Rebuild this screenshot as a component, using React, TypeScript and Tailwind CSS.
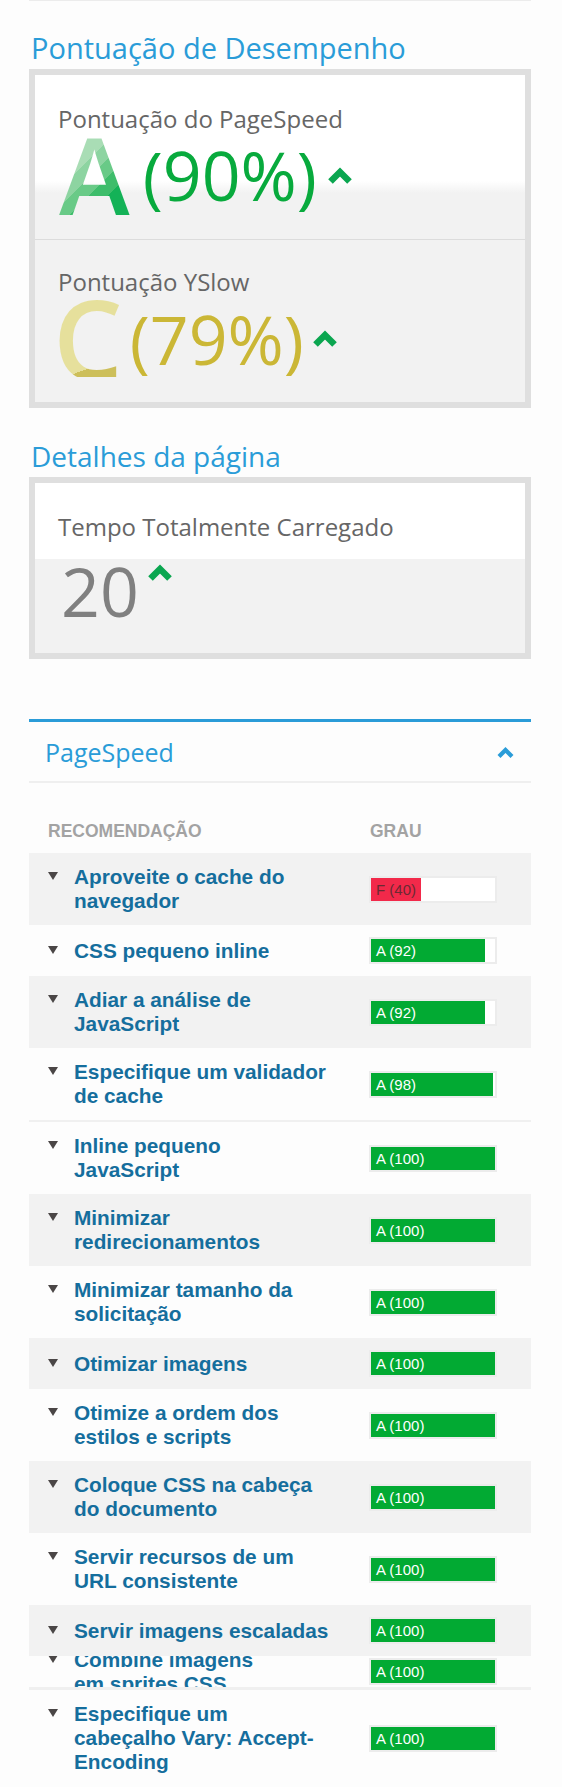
import React from "react";

type Row = {
  lines: string[];
  grade: string;
  score: number;
  gray: boolean;
  clip?: boolean;
  lineBefore?: number;
};

const rows: Row[] = [
  { lines: ["Aproveite o cache do", "navegador"], grade: "F", score: 40, gray: true },
  { lines: ["CSS pequeno inline"], grade: "A", score: 92, gray: false },
  { lines: ["Adiar a análise de", "JavaScript"], grade: "A", score: 92, gray: true },
  { lines: ["Especifique um validador", "de cache"], grade: "A", score: 98, gray: false },
  { lines: ["Inline pequeno", "JavaScript"], grade: "A", score: 100, gray: false, lineBefore: 2 },
  { lines: ["Minimizar", "redirecionamentos"], grade: "A", score: 100, gray: true },
  { lines: ["Minimizar tamanho da", "solicitação"], grade: "A", score: 100, gray: false },
  { lines: ["Otimizar imagens"], grade: "A", score: 100, gray: true },
  { lines: ["Otimize a ordem dos", "estilos e scripts"], grade: "A", score: 100, gray: false },
  { lines: ["Coloque CSS na cabeça", "do documento"], grade: "A", score: 100, gray: true },
  { lines: ["Servir recursos de um", "URL consistente"], grade: "A", score: 100, gray: false },
  { lines: ["Servir imagens escaladas"], grade: "A", score: 100, gray: true },
  { lines: ["Combine imagens", "em sprites CSS"], grade: "A", score: 100, gray: false, clip: true },
  {
    lines: ["Especifique um", "cabeçalho Vary: Accept-", "Encoding"],
    grade: "A",
    score: 100,
    gray: false,
    lineBefore: 3,
  },
];

function GreenCaret({ className }: { className?: string }) {
  return (
    <svg width="26" height="19" viewBox="0 0 26 19" className={className}>
      <polyline
        points="3.5,15.5 13,6 22.5,15.5"
        fill="none"
        stroke="#0ba650"
        strokeWidth="6.5"
        strokeLinejoin="miter"
        strokeLinecap="butt"
      />
    </svg>
  );
}

function Bar({ grade, score }: { grade: string; score: number }) {
  const isF = grade === "F";
  return (
    <div className="h-[27px] w-[128px] shrink-0 border-2 border-[#ececec] bg-white">
      <div
        className={
          isF
            ? "h-full bg-[#f2294a] text-[#6b2a33]"
            : "h-full bg-[#02aa33] text-white"
        }
        style={{ width: `${score}%` }}
      >
        <span className="block whitespace-nowrap pl-[5px] text-[15px] leading-[23px] font-['Liberation_Sans',Arial,sans-serif]">
          {grade} ({score})
        </span>
      </div>
    </div>
  );
}

function TableRow({ row }: { row: Row }) {
  return (
    <div
      className={
        (row.gray ? "bg-[#f2f2f2] " : "") +
        (row.clip ? "h-[31px] overflow-hidden " : "") +
        "flex items-center py-[12px] pl-[19px]"
      }
    >
      <div className="flex w-[321px] shrink-0 items-start">
        <svg width="10" height="8" viewBox="0 0 10 8" className="mt-[7px] shrink-0">
          <polygon points="0,0 10,0 5,8" fill="#4a4646" />
        </svg>
        <div className="ml-[16px] text-[20.8px] font-bold leading-[24px] text-[#156e9d] font-['Liberation_Sans',Arial,sans-serif]">
          {row.lines.map((l, i) => (
            <div key={i} className="whitespace-nowrap">
              {l}
            </div>
          ))}
        </div>
      </div>
      <Bar grade={row.grade} score={row.score} />
    </div>
  );
}

export default function App() {
  return (
    <div className="min-h-[1787px] w-[562px] overflow-hidden bg-[#fdfdfd] font-['Open_Sans',sans-serif]">
      <div className="ml-[29px] w-[502px]">
        <div className="h-px bg-[#ececec]" />

        {/* Section 1 title */}
        <div className="h-[68px] pl-[2px] pt-[31px]">
          <h2 className="text-[29px] leading-[32px] text-[#2a9cd8]">Pontuação de Desempenho</h2>
        </div>

        {/* Card 1 */}
        <div className="border-[6px] border-[#dfdfdf]">
          <div className="h-[165px] border-b border-[#dcdcdc] bg-[linear-gradient(to_bottom,#ffffff_0px,#ffffff_106px,#f2f2f2_118px)] pl-[23px] pt-[30px]">
            <div className="text-[24px] leading-[28px] text-[#666666]">Pontuação do PageSpeed</div>
            <div className="mt-[2px] flex items-start">
              <span className="bg-[linear-gradient(135deg,#a9ddb5_0%,#a9ddb5_36%,#8dd4a1_36%,#8dd4a1_48%,#69ca87_48%,#69ca87_60%,#3ebd6b_60%,#3ebd6b_72%,#14b257_72%,#14b257_100%)] bg-clip-text text-[110px] font-semibold leading-[80px] text-transparent">
                A
              </span>
              <span className="ml-[12px] mt-[5px] text-[68px] leading-[70px] text-[#08aa3d]">(90%)</span>
              <GreenCaret className="ml-[10px] mt-[31px]" />
            </div>
          </div>
          <div className="h-[162px] bg-[#f2f2f2] pl-[23px] pt-[28px]">
            <div className="text-[24px] leading-[28px] text-[#666666]">Pontuação YSlow</div>
            <div className="mt-[1px] flex items-start">
              <span className="ml-[-5px] bg-[linear-gradient(160deg,#e6e09c_0%,#e6e09c_80%,#cdbf5a_80%,#cdbf5a_100%)] bg-clip-text text-[110px] font-semibold leading-[80px] text-transparent">
                C
              </span>
              <span className="ml-[7px] mt-[7px] text-[68px] leading-[70px] text-[#cbb736]">(79%)</span>
              <GreenCaret className="ml-[8px] mt-[32px]" />
            </div>
          </div>
        </div>

        {/* Section 2 title */}
        <div className="h-[69px] pl-[2px] pt-[32px]">
          <h2 className="text-[28px] leading-[32px] text-[#2a9cd8]">Detalhes da página</h2>
        </div>

        {/* Card 2 */}
        <div className="border-[6px] border-[#dfdfdf]">
          <div className="h-[170px] bg-[linear-gradient(to_bottom,#ffffff_0px,#ffffff_76px,#f2f2f2_76px)] pl-[23px] pt-[30px]">
            <div className="text-[24px] leading-[28px] text-[#666666]">Tempo Totalmente Carregado</div>
            <div className="mt-[15px] flex items-start">
              <span className="ml-[3px] text-[68px] leading-[70px] text-[#808080]">20</span>
              <GreenCaret className="ml-[8px] mt-[7px]" />
            </div>
          </div>
        </div>

        {/* PageSpeed panel */}
        <div className="mt-[60px] h-[3px] bg-[#2a9cd8]" />
        <div className="flex h-[59px] justify-between pl-[16px] pr-[16px] pt-[16px]">
          <div className="text-[25px] leading-[28px] text-[#2a9cd8]">PageSpeed</div>
          <svg width="19" height="13" viewBox="0 0 19 13" className="mt-[8px]">
            <polyline
              points="3,10.5 9.5,4 16,10.5"
              fill="none"
              stroke="#2a9cd8"
              strokeWidth="4.2"
              strokeLinejoin="miter"
            />
          </svg>
        </div>
        <div className="h-[2px] bg-[#efefef]" />

        <div className="flex h-[70px] pt-[38px] text-[17.5px] font-bold leading-[20px] text-[#a3a3a3] font-['Liberation_Sans',Arial,sans-serif]">
          <div className="w-[341px] pl-[19px]">RECOMENDAÇÃO</div>
          <div>GRAU</div>
        </div>

        {rows.map((row, i) => (
          <React.Fragment key={i}>
            {row.lineBefore ? (
              <div className={row.lineBefore === 3 ? "h-[3px] bg-[#f0f0f0]" : "h-[2px] bg-[#f0f0f0]"} />
            ) : null}
            <TableRow row={row} />
          </React.Fragment>
        ))}
      </div>
    </div>
  );
}
